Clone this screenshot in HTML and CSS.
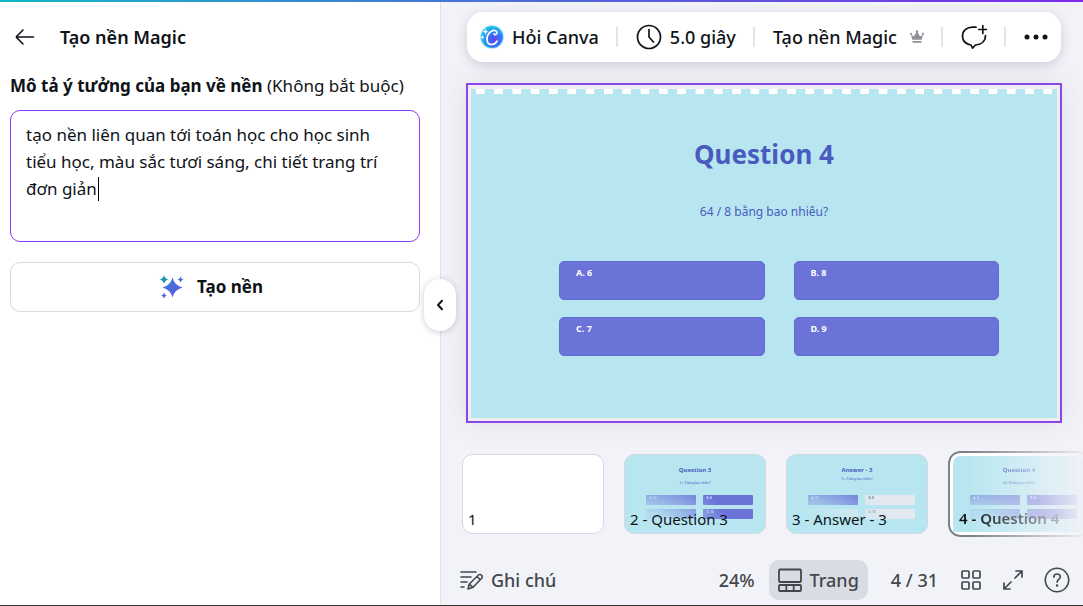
FILE: index.html
```html
<!doctype html>
<html lang="vi">
<head>
    <meta charset="utf-8">
    <meta name="viewport" content="width=device-width, initial-scale=1">
    <title>Tạo nền Magic</title>
    <link rel="stylesheet" href="styles.css">
</head>
<body>
    <div class="topline"></div>
    <div class="app">
        <!-- side panel -->
        <aside class="panel">
            <header class="panel-head">
                <button class="icon-btn" type="button" aria-label="Quay lại">
                    <svg width="20" height="18" viewBox="0 0 20 18" fill="none" stroke="#0e1318" stroke-width="1.6" stroke-linecap="round" stroke-linejoin="round"><path d="M8 2 1.8 8.2a1 1 0 0 0 0 1.6L8 16M1.5 9h17"/></svg>
                </button>
                <h1>Tạo nền Magic</h1>
            </header>
            <label class="field-label" for="prompt"><b>Mô tả ý tưởng của bạn về nền</b> (Không bắt buộc)</label>
            <div class="field">
                <textarea id="prompt" spellcheck="false">tạo nền liên quan tới toán học cho học sinh tiểu học, màu sắc tươi sáng, chi tiết trang trí đơn giản</textarea>
                <span class="caret"></span>
            </div>
            <button class="generate" type="button">
                <svg width="26" height="26" viewBox="0 0 26 26">
                    <defs><linearGradient id="spark" x1="0" y1="0" x2="1" y2="1"><stop offset="0" stop-color="#2b86d0"/><stop offset="1" stop-color="#6a4de6"/></linearGradient></defs>
                    <path fill="url(#spark)" d="M13.500 3.500Q15.500 11.500 23.500 13.500Q15.500 15.500 13.500 23.500Q11.500 15.500 3.500 13.500Q11.500 11.500 13.500 3.500Z"/>
                    <path fill="#1f93b8" d="M5 1Q5.900 4.600 9.500 5.500Q5.900 6.400 5 10Q4.100 6.400 .5 5.500Q4.100 4.600 5 1Z"/>
                    <path fill="#4668d6" d="M21.500 2.500Q22 5 24.500 5.500Q22 6 21.500 8.500Q21 6 18.500 5.500Q21 5 21.500 2.500Z"/>
                    <path fill="#4f63dc" d="M5 18.500Q5.500 21 8 21.500Q5.500 22 5 24.500Q4.500 22 2 21.500Q4.500 21 5 18.500Z"/>
                </svg>
                Tạo nền
            </button>
            <button class="collapse" type="button" aria-label="Thu gọn">
                <svg width="8" height="12" viewBox="0 0 8 12" fill="none" stroke="#0e1318" stroke-width="2" stroke-linecap="round" stroke-linejoin="round"><path d="M6 1.800 2 6l4 4.200"/></svg>
            </button>
        </aside>

        <main class="editor">
            <div class="toolbar">
                <button type="button">
                    <svg width="24" height="26" viewBox="0 0 24 26">
                        <defs>
                            <radialGradient id="orb" cx=".6" cy=".62" r=".6"><stop offset="0" stop-color="#6a3df0"/><stop offset=".5" stop-color="#3277f5"/><stop offset="1" stop-color="#1bc4e8"/></radialGradient>
                        </defs>
                        <circle cx="12" cy="13" r="12" fill="#49b7f5" opacity=".35"/>
                        <circle cx="12" cy="13" r="11" fill="url(#orb)"/>
                        <path d="M14 10c.6 1.400 3.200.6 2.900-1.600-.3-2.100-3-2.600-5.400-1.200-3 1.700-4.700 5.300-4.500 8.600.2 2.900 2 4.700 4.600 4.700 2.300 0 4.300-1.300 5.400-3.400" fill="none" stroke="#fff" stroke-width="1.700" stroke-linecap="round"/>
                        <path d="M5.500 4.500 6.300 7l2.200.8-2.200.8-.8 2.400-.8-2.400-2.200-.8L4.700 7zM2.500 11l.6 1.600 1.500.6-1.500.6-.6 1.600-.6-1.600-1.500-.6 1.500-.6z" fill="#fff"/>
                    </svg>
                    Hỏi Canva
                </button>
                <i class="divider"></i>
                <button type="button">
                    <svg width="26" height="26" viewBox="0 0 26 26" fill="none" stroke="#0e1318" stroke-width="1.700" stroke-linecap="round" stroke-linejoin="round"><circle cx="13" cy="13" r="11.500"/><path d="M13 5.500V13l4.500 5"/></svg>
                    5.0 giây
                </button>
                <i class="divider"></i>
                <button class="magic" type="button">
                    Tạo nền Magic
                    <svg width="14" height="14" viewBox="0 0 14 14" fill="#8d9197"><path d="M2.300 9.800 1 4.500 4 6.500 6.400 2h1.200L10 6.500l3-2-1.300 5.300zM2.500 11h9v1.700h-9z"/><circle cx="7" cy="1.500" r="1.200"/><circle cx="1.100" cy="3.800" r="1.100"/><circle cx="12.900" cy="3.800" r="1.100"/></svg>
                </button>
                <i class="divider"></i>
                <button type="button" aria-label="Bình luận">
                    <svg width="26" height="26" viewBox="0 0 26 26" fill="none" stroke="#0e1318" stroke-width="1.700" stroke-linecap="round" stroke-linejoin="round"><path d="M15 3.200h-3.500C5.500 3.200 1.500 7 1.500 12c0 4.700 3.200 8 8.500 9l1.500 3.200 3-3.200c6-.4 10-4 10-9.500M21.800 1.500v8M17.800 5.500h8"/></svg>
                </button>
                <i class="divider"></i>
                <button type="button" aria-label="Thêm">
                    <svg width="24" height="6" viewBox="0 0 24 6" fill="#0e1318"><circle cx="3" cy="3" r="2.500"/><circle cx="12" cy="3" r="2.500"/><circle cx="21" cy="3" r="2.500"/></svg>
                </button>
            </div>

            <!-- current slide -->
            <section class="frame">
                <div class="slide">
                    <h2>Question 4</h2>
                    <p>64 / 8 bằng bao nhiêu?</p>
                    <div class="answers">
                        <div>A. 6</div>
                        <div>B. 8</div>
                        <div>C. 7</div>
                        <div>D. 9</div>
                    </div>
                </div>
            </section>

            <nav class="pages" aria-label="Trang">
                <button class="page blank" type="button"><span class="page-name">1</span></button>
                <button class="page" type="button">
                    <span class="mini">
                        <strong>Question 3</strong>
                        <small>3 + 9 bằng bao nhiêu?</small>
                        <span class="mini-answers"><i>A. 12</i><i>B. 8</i><i></i><i>D. 10</i></span>
                    </span>
                    <span class="page-name">2 - Question 3</span>
                </button>
                <button class="page" type="button">
                    <span class="mini answer">
                        <strong>Answer - 3</strong>
                        <small>3 + 9 bằng bao nhiêu?</small>
                        <span class="mini-answers"><i>A. 12</i><i class="off">B. 8</i><i class="off"></i><i class="off">D. 10</i></span>
                    </span>
                    <span class="page-name">3 - Answer - 3</span>
                </button>
                <button class="page active" type="button">
                    <span class="mini">
                        <strong>Question 4</strong>
                        <small>64 / 8 bằng bao nhiêu?</small>
                        <span class="mini-answers"><i>A. 6</i><i>B. 8</i><i></i><i></i></span>
                    </span>
                    <span class="page-name">4 - Question 4</span>
                </button>
            </nav>

            <footer class="status">
                <button class="notes" type="button">
                    <svg width="24" height="22" viewBox="0 0 24 22" fill="none" stroke="#43474d" stroke-width="1.600" stroke-linecap="round" stroke-linejoin="round"><path d="M1 3h15M1 8h10M1 13h6M1 18h3M8 20l1.300-5L18.500 6a1.900 1.900 0 0 1 2.700 0l.5.5a1.900 1.900 0 0 1 0 2.700L13 18.300zM17 7.500l3.200 3.200M9.300 15l3.700 3.300"/></svg>
                    Ghi chú
                </button>
                <button class="zoom" type="button">24%</button>
                <button class="view" type="button">
                    <svg width="24" height="24" viewBox="0 0 24 24" fill="none" stroke="#43474d" stroke-width="1.800" stroke-linejoin="round"><rect x="1" y="1.500" width="22" height="12.500" rx="1"/><rect x="1" y="17" width="22" height="6" rx="1"/><path d="M8.300 17v6M15.700 17v6"/></svg>
                    Trang
                </button>
                <span class="count">4 / 31</span>
                <button type="button" aria-label="Chế độ lưới">
                    <svg width="22" height="22" viewBox="0 0 22 22" fill="none" stroke="#43474d" stroke-width="1.700"><rect x="2" y="2" width="7" height="7" rx="1"/><rect x="13" y="2" width="7" height="7" rx="1"/><rect x="2" y="13" width="7" height="7" rx="1"/><rect x="13" y="13" width="7" height="7" rx="1"/></svg>
                </button>
                <button type="button" aria-label="Toàn màn hình">
                    <svg width="22" height="22" viewBox="0 0 22 22" fill="none" stroke="#43474d" stroke-width="1.700" stroke-linecap="round" stroke-linejoin="round"><path d="M14 2h6v6M20 2l-7 7M8 20H2v-6M2 20l7-7"/></svg>
                </button>
                <button type="button" aria-label="Trợ giúp">
                    <svg width="26" height="26" viewBox="0 0 26 26" fill="none" stroke="#43474d" stroke-width="1.600" stroke-linecap="round"><circle cx="13" cy="13" r="11.700"/><path d="M9.800 10.200c0-1.900 1.400-3.200 3.300-3.200s3.200 1.300 3.200 3c0 2.500-3.200 2.500-3.200 5.200"/><circle cx="13.100" cy="18.500" r=".5" fill="#43474d"/></svg>
                </button>
            </footer>
        </main>
    </div>
</body>
</html>
```
FILE: styles.css
```css
*{
    box-sizing: border-box;
    margin: 0;
    padding: 0;
}
body{
    display: flex;
    flex-direction: column;
    min-height: 100vh;
    background: #f2f3f8;
    border-bottom: 1px solid #333;
    font-family: "Noto Sans", sans-serif;
    font-size: 17px;
    line-height: 24px;
    color: #0e1318;
    overflow-x: hidden;
}
button{
    display: flex;
    align-items: center;
    border: 0;
    background: none;
    font: inherit;
    color: inherit;
    white-space: nowrap;
    cursor: pointer;
}
svg{
    flex: none;
}
.topline{
    height: 2px;
    background: linear-gradient(90deg, #12b8c4, #4a70d8 45%, #7d2ae8);
}
.app{
    flex: 1;
    display: flex;
}

/* side panel */
.panel{
    position: relative;
    flex: 0 0 441px;
    padding: 23px 20px 20px 10px;
    background: #fff;
    border-right: 1px solid #dfe1e8;
}
.panel-head{
    display: flex;
    align-items: center;
    gap: 25px;
    margin-bottom: 25px;
}
.icon-btn{
    padding-left: 5px;
}
.panel-head h1{
    font-size: 18px;
    font-weight: 600;
}
.field-label{
    display: block;
    margin-bottom: 12px;
    white-space: nowrap;
}
.field-label b{
    font-weight: 700;
}
.field{
    position: relative;
    margin-bottom: 20px;
}
.field textarea{
    display: block;
    width: 100%;
    height: 132px;
    padding: 10px 15px;
    border: 1px solid #8b3dff;
    border-radius: 10px;
    outline: 0;
    resize: none;
    font: inherit;
    line-height: 27px;
    color: inherit;
}
.caret{
    position: absolute;
    top: 67px;
    left: 88px;
    width: 1px;
    height: 24px;
    background: #000;
}
.generate{
    justify-content: center;
    gap: 12px;
    width: 100%;
    height: 50px;
    padding-right: 8px;
    border: 1px solid #d9dbe0;
    border-radius: 10px;
    font-weight: 700;
}
.collapse{
    position: absolute;
    top: 277px;
    right: -16px;
    justify-content: center;
    width: 32px;
    height: 52px;
    border-radius: 16px;
    background: #fff;
    box-shadow: 0 1px 6px rgba(60, 60, 90, .25);
}

/* editor */
.editor{
    flex: 1;
    min-width: 0;
    display: flex;
    flex-direction: column;
    padding-top: 10px;
}
.toolbar{
    display: flex;
    align-items: center;
    justify-content: space-between;
    height: 50px;
    margin: 0 22px 21px 26px;
    padding: 0 13px;
    border-radius: 16px;
    background: #fff;
    box-shadow: 0 3px 12px rgba(60, 60, 90, .2);
    font-size: 18px;
    font-weight: 500;
}
.toolbar button{
    gap: 8px;
}
.toolbar .magic{
    gap: 13px;
}
.divider{
    width: 2px;
    height: 20px;
    background: #e3e4e8;
}
.frame{
    margin: 0 21px 28px 25px;
    padding: 4px 3px 3px;
    border: 2px solid #8b46e8;
    background: #f1edf5;
    box-shadow: 0 0 24px rgba(60, 60, 90, .1);
}
.slide{
    aspect-ratio: 586 / 329;
    padding-top: 45px;
    background: linear-gradient(90deg, transparent 28%, #fff 28% 76%, transparent 76%) 0 0 / 3.125% 5px repeat-x #b7e6f0;
    color: #4a5bbf;
    text-align: center;
}
.slide h2{
    font-size: 26px;
    line-height: 40px;
}
.slide p{
    margin-top: 28px;
    font-size: 12px;
    line-height: 20px;
}
.answers{
    display: grid;
    grid-template-columns: 1fr 1fr;
    gap: 17px 29px;
    margin: 39px 58px 0 88px;
}
.answers div{
    height: 39px;
    padding: 3px 16px;
    border: 1px solid #5f6fcf;
    border-radius: 5px;
    background: #6b72d8;
    color: #fff;
    font-size: 9px;
    font-weight: 700;
    line-height: 16px;
    text-align: left;
}

/* page strip */
.pages{
    display: flex;
    align-items: center;
    gap: 20px;
    height: 86px;
    padding-left: 21px;
    overflow: hidden;
}
.page{
    position: relative;
    flex: 0 0 142px;
    height: 80px;
    border: 1px solid #d5d8e2;
    border-radius: 10px;
    background: #b7e6f0;
    overflow: hidden;
}
.page.blank{
    background: #fff;
}
.page-name{
    position: absolute;
    left: 5px;
    bottom: 2px;
    font-size: 15px;
}
.mini{
    align-self: stretch;
    display: flex;
    flex-direction: column;
    align-items: center;
    width: 100%;
    padding-top: 10px;
    color: #4a5bbf;
}
.mini strong{
    font-size: 6px;
    line-height: 10px;
}
.mini small{
    margin-top: 5px;
    font-size: 3px;
    line-height: 6px;
}
.mini.answer small{
    margin: 1px 0 4px;
}
.mini-answers{
    display: grid;
    grid-template-columns: 50px 50px;
    gap: 4px 7px;
    margin: 9px 0 0 8px;
}
.mini-answers i{
    height: 10px;
    padding-left: 4px;
    border-radius: 1px;
    background: #6b72d8;
    color: #fff;
    font-size: 3px;
    font-style: normal;
    line-height: 6px;
    text-align: left;
}
.mini-answers .off{
    background: #e4e8f0;
    color: #555;
}
/* light wash that keeps the page name readable */
.page .mini::after{
    content: "";
    position: absolute;
    inset: 0;
    background: radial-gradient(ellipse at 10% 100%, rgba(183, 230, 240, .9) 20%, rgba(183, 230, 240, 0) 52%);
}
.page .page-name{
    z-index: 1;
}
.page.active{
    height: 86px;
    border: 2px solid #7d8087;
    border-radius: 12px;
    background: #b7e6f0;
    box-shadow: inset 0 0 0 3px #fff;
    -webkit-mask: linear-gradient(90deg, #000 15%, transparent 100%);
    mask: linear-gradient(90deg, #000 15%, transparent 100%);
}
.page.active .mini{
    padding-top: 12px;
}
.page.active .mini::after{
    inset: 3px;
}
.page.active .page-name{
    left: 9px;
    bottom: 5px;
    font-weight: 600;
}

/* status bar */
.status{
    display: flex;
    align-items: center;
    height: 40px;
    margin-top: auto;
    margin-bottom: 5px;
    padding: 0 13px 0 19px;
    color: #43474d;
    font-size: 18px;
    font-weight: 500;
}
.notes{
    gap: 7px;
    margin-right: auto;
}
.view{
    gap: 8px;
    height: 40px;
    padding: 0 9px;
    border-radius: 10px;
    background: #dadce4;
}
.count{
    margin: 0 22px 0 23px;
}
.status button + button{
    margin-left: 20px;
}
.status .zoom + .view{
    margin-left: 14px;
}
```
